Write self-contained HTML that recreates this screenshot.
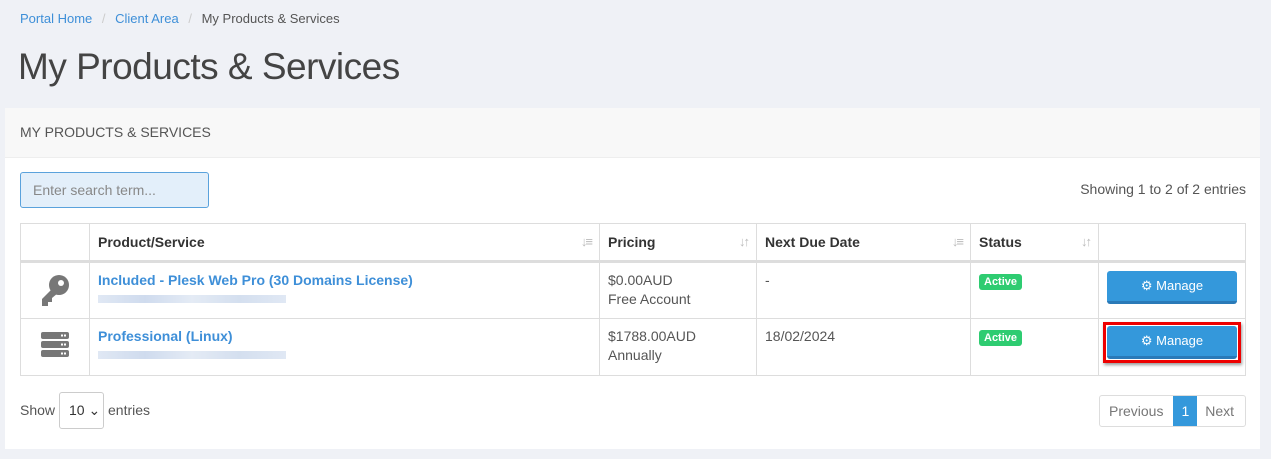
<!DOCTYPE html><html><head><style>
body{margin:0;background:#eff1f6;font-family:"Liberation Sans",sans-serif;color:#555;width:1271px;height:459px;overflow:hidden;position:relative}
.a{position:absolute}
a{color:#3e8fd8;text-decoration:none}
table{border-collapse:collapse;position:absolute;left:20px;top:223px;width:1226px;font-size:14px;table-layout:fixed}
td,th{border:1px solid #ddd;padding:0 8px;vertical-align:top;text-align:left}
th{height:36px;vertical-align:middle;color:#333;border-bottom:3px solid #ddd;position:relative}
td{height:57px;padding-top:9px;box-sizing:border-box}
.s{position:absolute;right:8px;top:10px;color:#bbb;font-size:13px;letter-spacing:-2px}
.blur{display:block;margin-top:7px;width:188px;height:8px;background:linear-gradient(90deg,#e0e8f4,#cfdbee,#e4ebf5,#d4dfef,#e0e8f4)}
.badge{display:inline-block;background:#2ecc71;color:#fff;font-size:11px;font-weight:bold;padding:2px 5px;border-radius:3px;margin-top:2px}
.btn{width:130px;height:30px;background:#3498db;border-bottom:3px solid #2a7ab8;border-radius:3px;color:#fff;font-size:13px;text-align:center;line-height:29px;margin:0 auto}
</style></head><body>
<div class="a" style="left:20px;top:11px;font-size:13px"><a>Portal Home</a> <span style="color:#ccc;margin:0 6px">/</span> <a>Client Area</a> <span style="color:#ccc;margin:0 6px">/</span> <span style="color:#555">My Products &amp; Services</span></div>
<div class="a" style="left:18px;top:46px;font-size:37px;color:#444;letter-spacing:-0.5px">My Products &amp; Services</div>
<div class="a" style="left:5px;top:108px;width:1255px;height:341px;background:#fff"></div>
<div class="a" style="left:5px;top:108px;width:1255px;height:49px;background:#f8f8f8;border-bottom:1px solid #eee"></div>
<div class="a" style="left:20px;top:124px;font-size:14px;color:#555">MY PRODUCTS &amp; SERVICES</div>
<div class="a" style="left:20px;top:172px;border:1px solid #5aa2dc;border-radius:3px;background:#e3effa;font-size:14px;color:#888;line-height:34px;padding-left:12px;box-sizing:border-box;width:189px;height:36px">Enter search term...</div>
<div class="a" style="right:25px;top:181px;font-size:14px">Showing 1 to 2 of 2 entries</div>
<table>
<colgroup><col style="width:69px"><col style="width:510px"><col style="width:157px"><col style="width:214px"><col style="width:128px"><col></colgroup>
<tr><th></th><th>Product/Service<span class="s">↓≡</span></th><th>Pricing<span class="s">↓↑</span></th><th>Next Due Date<span class="s">↓≡</span></th><th>Status<span class="s">↓↑</span></th><th></th></tr>
<tr><td style="text-align:center;padding-top:12px"><svg width="30" height="32" viewBox="0 0 30 32"><circle cx="19" cy="10" r="10" fill="#777"/><circle cx="21" cy="8" r="3" fill="#fff"/><path d="M12 14 L2 24 L2 31 L8 31 L8 27 L12 27 L12 23 L18 18Z" fill="#777"/></svg></td><td><a style="font-weight:bold">Included - Plesk Web Pro (30 Domains License)</a><span class="blur"></span></td><td>$0.00AUD<br><span style="line-height:22px">Free Account</span></td><td>-</td><td><span class="badge">Active</span></td><td style="padding:8px 0 0"><div class="btn">⚙ Manage</div></td></tr>
<tr><td style="text-align:center;padding-top:13px"><svg width="28" height="26" viewBox="0 0 28 26"><rect y="0" width="28" height="7" rx="2" fill="#777"/><rect y="9" width="28" height="7" rx="2" fill="#777"/><rect y="18" width="28" height="7" rx="2" fill="#777"/><g fill="#fff"><rect x="20" y="2.5" width="2" height="2"/><rect x="23" y="2.5" width="2" height="2"/><rect x="20" y="11.5" width="2" height="2"/><rect x="23" y="11.5" width="2" height="2"/><rect x="20" y="20.5" width="2" height="2"/><rect x="23" y="20.5" width="2" height="2"/></g></svg></td><td><a style="font-weight:bold">Professional (Linux)</a><span class="blur"></span></td><td>$1788.00AUD<br><span style="line-height:22px">Annually</span></td><td>18/02/2024</td><td><span class="badge">Active</span></td><td style="padding:3px 0 0"><div style="border:3px solid #e00;width:130px;margin:0 auto;box-shadow:1px 2px 3px #999;padding:1px;box-sizing:content-box"><div class="btn">⚙ Manage</div></div></td></tr>
</table>
<div class="a" style="left:20px;top:402px;font-size:14px">Show</div>
<div class="a" style="left:59px;top:392px;border:1px solid #ccc;border-radius:3px;font-size:14px;line-height:35px;padding-left:9px;box-sizing:border-box;width:45px;height:37px;color:#333">10 ⌄</div>
<div class="a" style="left:108px;top:402px;font-size:14px">entries</div>
<div class="a" style="left:1099px;top:395px;height:30px;border:1px solid #ddd;border-radius:3px;display:flex;font-size:14px;line-height:30px;color:#777">
<span style="padding:0 10px 0 9px">Previous</span><span style="background:#3498db;color:#fff;padding:0 8px">1</span><span style="padding:0 11px 0 8px">Next</span></div>
</body></html>
